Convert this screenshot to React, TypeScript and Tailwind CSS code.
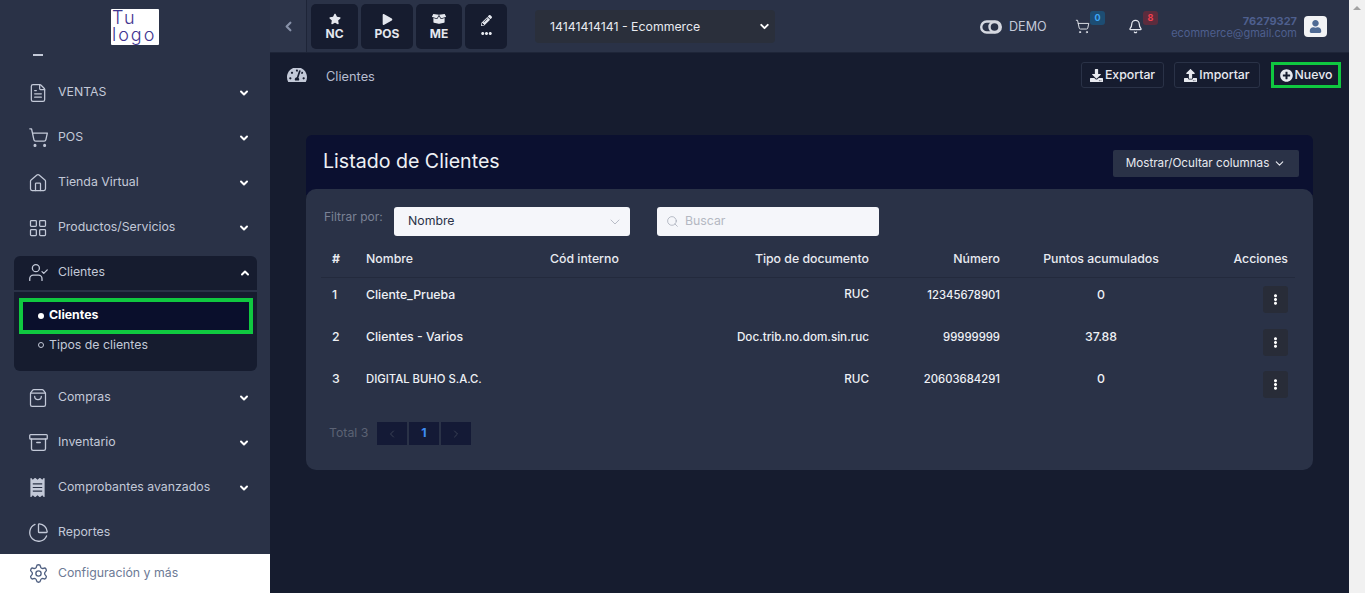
import React from 'react';
import {
  FileText,
  ShoppingCart,
  House,
  LayoutGrid,
  UserCheck,
  ShoppingBag,
  Archive,
  ChartPie,
  Settings,
  ChevronDown,
  ChevronLeft,
  ChevronRight,
  ChevronUp,
  Search,
  Bell,
} from 'lucide-react';
import {
  FaStar,
  FaPlay,
  FaBoxOpen,
  FaPencilAlt,
  FaEllipsisH,
  FaEllipsisV,
  FaTachometerAlt,
  FaDownload,
  FaUpload,
  FaPlusCircle,
  FaUser,
  FaReceipt,
} from 'react-icons/fa';

const MenuItem: React.FC<{ icon: React.ReactNode; label: string; arrow?: boolean }> = ({ icon, label, arrow = true }) => (
  <div className="flex h-[45px] items-center pl-[28px] pr-[20px] text-[12.3px] text-[#c3c9d8]">
    <span className="flex w-[30px] shrink-0 items-center">{icon}</span>
    <span className="flex-1 whitespace-nowrap">{label}</span>
    {arrow && <ChevronDown size={12} strokeWidth={4} className="text-white" />}
  </div>
);

const Sidebar = () => {
  const ic = 'text-[#c3c9d8]';
  return (
    <aside className="flex w-[270px] shrink-0 flex-col bg-[#2a3247]">
      <div className="flex h-[53px] shrink-0 justify-center pt-[9px]">
        <div className="h-[36px] w-[48px] rounded-[1px] bg-white pl-[1px] text-[18px] leading-[17px] font-light tracking-[2px] text-[#3f3590]">
          Tu
          <br />
          logo
        </div>
      </div>
      <div className="flex-1 overflow-hidden">
        <div className="mb-[14px] ml-[33px] mt-[1px] h-[2px] w-[10px] bg-[#c3c9d8]" />
        <MenuItem icon={<FileText size={20} strokeWidth={1.5} className={ic} />} label="VENTAS" />
        <MenuItem icon={<ShoppingCart size={21} strokeWidth={1.5} className={ic} />} label="POS" />
        <MenuItem icon={<House size={20} strokeWidth={1.5} className={ic} />} label="Tienda Virtual" />
        <MenuItem icon={<LayoutGrid size={20} strokeWidth={1.5} className={ic} />} label="Productos/Servicios" />
        <div className="mb-[4px] ml-[14px] mr-[13px] mt-[6px] h-[115px] rounded-[6px] bg-[#161c2f]">
          <div className="flex h-[36px] items-center border-b-2 border-[#2a3247] pb-[1px] pl-[14px] pr-[6px] text-[12.3px] text-[#c3c9d8]">
            <span className="flex w-[30px] shrink-0 items-center">
              <UserCheck size={21} strokeWidth={1.5} className={ic} />
            </span>
            <span className="flex-1">Clientes</span>
            <ChevronUp size={12} strokeWidth={4} className="text-white" />
          </div>
          <div className="ml-[5px] mr-[4px] mt-[6px] flex h-[36px] items-center border-4 border-[#10c840] bg-[#0a0f2c] pb-[1px] pl-[15px] text-[12.3px] font-bold text-white">
            <span className="mr-[5px] h-[6px] w-[6px] rounded-full bg-white" />
            Clientes
          </div>
          <div className="ml-[24px] mt-[1px] flex h-[20px] items-center text-[12.3px] text-[#c3c9d8]">
            <span className="mr-[5px] h-[6px] w-[6px] rounded-full border border-[#c3c9d8]" />
            Tipos de clientes
          </div>
        </div>
        <MenuItem icon={<ShoppingBag size={20} strokeWidth={1.5} className={ic} />} label="Compras" />
        <MenuItem icon={<Archive size={21} strokeWidth={1.5} className={ic} />} label="Inventario" />
        <MenuItem icon={<FaReceipt size={19} className={ic} />} label="Comprobantes avanzados" />
        <MenuItem icon={<ChartPie size={21} strokeWidth={1.5} className={ic} />} label="Reportes" arrow={false} />
      </div>
      <div className="flex h-[39px] shrink-0 items-center bg-white pl-[28px] text-[12.3px] text-[#6d7a95]">
        <Settings size={21} strokeWidth={1.5} className="mr-[9px] text-[#4f5f80]" />
        Configuración y más
      </div>
    </aside>
  );
};

const QuickButton: React.FC<{ icon: React.ReactNode; label: React.ReactNode; className: string }> = ({ icon, label, className }) => (
  <div className={`flex h-[45px] flex-col items-center justify-center rounded-[5px] bg-[#161c2f] text-[12px] leading-[14px] font-bold text-[#e4e7ee] ${className}`}>
    <span className="flex h-[15px] items-center">{icon}</span>
    {label}
  </div>
);

const Badge: React.FC<{ value: string; className: string }> = ({ value, className }) => (
  <span className={`absolute -top-[8px] left-[15px] flex h-[14px] w-[15px] items-center justify-center rounded-[3px] text-[9px] font-bold ${className}`}>
    {value}
  </span>
);

const TopBar = () => (
  <header className="flex h-[53px] shrink-0 items-center border-b border-[#1e2538] bg-[#2a3247]">
    <div className="flex h-full w-[37px] items-center justify-center border-r border-[#1e2538] bg-[#2d354a]">
      <ChevronLeft size={15} strokeWidth={3.5} className="text-[#8791a8]" />
    </div>
    <div className="ml-[4px] flex gap-[3px]">
      <QuickButton className="w-[47px]" icon={<FaStar size={12} />} label="NC" />
      <QuickButton className="w-[52px]" icon={<FaPlay size={11} />} label="POS" />
      <QuickButton className="w-[46px]" icon={<FaBoxOpen size={14} />} label="ME" />
      <QuickButton className="w-[42px]" icon={<FaPencilAlt size={11} />} label={<FaEllipsisH size={11} />} />
    </div>
    <div className="ml-[28px] flex h-[33px] w-[240px] items-center justify-between rounded-[4px] bg-[#2a2f3b] pl-[15px] pr-[4px] text-[12.3px] text-[#e8eaf0]">
      <span className="mt-[2px]">14141414141 - Ecommerce</span>
      <ChevronDown size={13} strokeWidth={3.5} className="text-white" />
    </div>
    <svg viewBox="0 0 22 14" className="ml-[205px] mt-[2px] h-[14px] w-[22px]" fill="none" stroke="#d5d8e0" strokeWidth="2.4">
      <rect x="1.2" y="1.5" width="19.6" height="11" rx="5.5" />
      <circle cx="14.5" cy="7" r="5" />
    </svg>
    <span className="ml-[7px] mt-[2px] w-[38px] text-[12.6px] text-[#c3c9d8]">DEMO</span>
    <div className="relative ml-[28px] mt-[2px] h-[16px] w-[15px]">
      <ShoppingCart size={15} strokeWidth={1.5} className="text-[#e4e7ee]" />
      <Badge value="0" className="bg-[#1d4d73] text-[#3ea6f5]" />
    </div>
    <div className="relative ml-[38px] mt-[2px] h-[16px] w-[15px]">
      <Bell size={15} strokeWidth={2} className="text-[#e4e7ee]" />
      <Badge value="8" className="bg-[#5c2c3d] text-[#f0414f]" />
    </div>
    <div className="ml-auto mr-[7px] mt-[2px] text-right text-[#4e5f8e]">
      <div className="text-[11px] leading-[12px] font-bold">76279327</div>
      <div className="text-[11px] leading-[12px]">ecommerce@gmail.com</div>
    </div>
    <div className="mr-[22px] mt-[1px] flex h-[21px] w-[23px] items-center justify-center rounded-[4px] bg-[#f2f3f5] text-[#4f6a94]">
      <FaUser size={13} />
    </div>
  </header>
);

const ActionButton: React.FC<{ icon: React.ReactNode; label: string; className: string }> = ({ icon, label, className }) => (
  <div className={`flex h-[26px] items-center justify-center rounded-[3px] bg-[#161c2f] text-[12.3px] font-medium text-[#e8eaf0] ${className}`}>
    <span className="mr-[2px]">{icon}</span>
    <span className="mt-[1px]">{label}</span>
  </div>
);

const rows = [
  { id: '1', name: 'Cliente_Prueba', doc: 'RUC', num: '12345678901', pts: '0', h: 'h-[43px]' },
  { id: '2', name: 'Clientes - Varios', doc: 'Doc.trib.no.dom.sin.ruc', num: '99999999', pts: '37.88', h: 'h-[42px]' },
  { id: '3', name: 'DIGITAL BUHO S.A.C.', doc: 'RUC', num: '20603684291', pts: '0', h: 'h-[42px]' },
];

const gridCols = 'grid grid-cols-[45px_184px_150px_169px_131px_202px_93px] items-center';

const Card = () => (
  <section className="ml-[36px] mr-[36px] mt-[47px]">
    <div className="flex h-[60px] items-start justify-between rounded-t-[6px] bg-[#0b1030] pl-[17px] pr-[14px] pt-[15px]">
      <h1 className="text-[19.6px] leading-[23px] text-[#eef0f5]">Listado de Clientes</h1>
      <div className="flex h-[27px] w-[186px] items-center justify-center rounded-[2px] bg-[#2a3247] text-[11.7px] text-[#e8eaf0]">
        Mostrar/Ocultar columnas
        <ChevronDown size={13} className="ml-[4px]" />
      </div>
    </div>
    <div className="-mt-[6px] h-[281px] rounded-[10px] bg-[#2a3247] pl-[15px] pt-[18px]">
      <div className="flex items-start">
        <span className="mt-[1px] w-[73px] pl-[3px] text-[12px] text-[#7a8296]">Filtrar por:</span>
        <div className="flex h-[29px] w-[236px] items-center justify-between rounded-[3px] bg-[#f5f6fa] pl-[14px] pr-[7px] text-[12.3px] text-[#2a3247]">
          <span>Nombre</span>
          <ChevronDown size={16} strokeWidth={1} className="text-[#9aa0ad]" />
        </div>
        <div className="ml-[27px] flex h-[29px] w-[222px] items-center rounded-[3px] bg-[#f5f6fa] pl-[9px] text-[12.3px] text-[#b4b8c2]">
          <Search size={13} strokeWidth={1.25} className="mr-[6px] text-[#9aa0ad]" />
          <span>Buscar</span>
        </div>
      </div>
      <div className={`${gridCols} mt-[3px] h-[39px] w-[974px] border-b border-[#232a3d] pt-[2px] text-[12.3px] font-medium text-[#e8eaf0]`}>
        <span className="pl-[11px] font-bold">#</span>
        <span>Nombre</span>
        <span>Cód interno</span>
        <span className="text-right">Tipo de documento</span>
        <span className="text-right">Número</span>
        <span className="text-center">Puntos acumulados</span>
        <span className="pr-[7px] text-right">Acciones</span>
      </div>
      {rows.map((r) => (
        <div key={r.id} className={`${gridCols} ${r.h} w-[974px] text-[12.3px] font-medium text-[#eef0f5]`}>
          <span className="-mt-[9px] pl-[11px]">{r.id}</span>
          <span className={`-mt-[9px] ${r.id === '3' ? 'text-[11.3px]' : ''}`}>{r.name}</span>
          <span />
          <span className="-mt-[9px] text-right text-[11.7px]">{r.doc}</span>
          <span className="-mt-[9px] text-right text-[11.3px]">{r.num}</span>
          <span className="-mt-[9px] text-center">{r.pts}</span>
          <span className="flex justify-end pr-[7px]">
            <span className="flex h-[27px] w-[25px] items-center justify-center rounded-[3px] bg-[#282c38] text-white">
              <FaEllipsisV size={11} />
            </span>
          </span>
        </div>
      ))}
      <div className="ml-[8px] mt-[17px] flex items-center">
        <span className="w-[48px] text-[12.3px] text-[#5b6274]">Total 3</span>
        <div className="flex gap-[2px]">
          <span className="flex h-[23px] w-[30px] items-center justify-center bg-[#141a36] text-[#3a4154]">
            <ChevronLeft size={12} />
          </span>
          <span className="flex h-[23px] w-[30px] items-center justify-center bg-[#141a36] text-[12.3px] font-bold text-[#3d8bf2]">1</span>
          <span className="flex h-[23px] w-[30px] items-center justify-center bg-[#141a36] text-[#3a4154]">
            <ChevronRight size={12} />
          </span>
        </div>
      </div>
    </div>
  </section>
);

export default function App() {
  return (
    <div className="flex h-[593px] w-full overflow-hidden bg-[#161c2f] font-[Inter,sans-serif]">
      <Sidebar />
      <main className="flex min-w-0 flex-1 flex-col">
        <TopBar />
        <div className="flex h-[35px] items-start pt-[9px]">
          <div className="flex h-[26px] flex-1 items-center pl-[17px]">
            <span className="h-[14px] overflow-hidden text-[#c3c9d8]">
              <FaTachometerAlt size={20} className="-mt-[3px]" />
            </span>
            <span className="ml-[19px] mt-[4px] text-[12.8px] text-[#b6bdcf]">Clientes</span>
          </div>
          <div className="mr-[8px] flex items-center">
            <ActionButton className="w-[83px] border border-[#2a3247]" icon={<FaDownload size={13} />} label="Exportar" />
            <ActionButton className="ml-[10px] w-[86px] border border-[#2a3247]" icon={<FaUpload size={13} />} label="Importar" />
            <ActionButton className="ml-[11px] w-[70px] rounded-none border-[3px] border-[#10c840]" icon={<FaPlusCircle size={13} />} label="Nuevo" />
          </div>
        </div>
        <Card />
      </main>
      <div className="flex w-[16px] shrink-0 justify-center bg-[#f1f1f1] pt-[6px]">
        <span className="h-0 w-0 border-x-[4px] border-b-[4px] border-x-transparent border-b-[#a3a3a3]" />
      </div>
    </div>
  );
}
